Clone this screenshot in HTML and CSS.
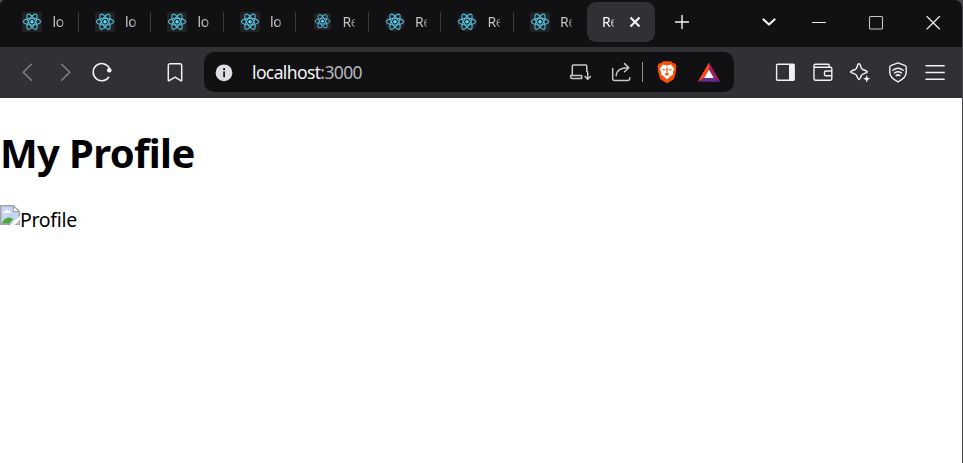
FILE: index.html
```html
<!DOCTYPE html>
<html lang="en">
<head>
<meta charset="utf-8">
<title>React App</title>
<link rel="stylesheet" href="styles.css">
</head>
<body>
<svg class="defs" width="0" height="0">
  <symbol id="react" viewBox="0 0 20 20">
    <g fill="none" stroke="#52b9d6" stroke-width="1.15">
      <ellipse cx="10" cy="9.7" rx="8.6" ry="3.3"/>
      <ellipse cx="10" cy="9.7" rx="8.6" ry="3.3" transform="rotate(60 10 9.7)"/>
      <ellipse cx="10" cy="9.7" rx="8.6" ry="3.3" transform="rotate(120 10 9.7)"/>
    </g>
    <circle cx="10" cy="9.7" r="1.7" fill="#61dafb"/>
  </symbol>
</svg>
<div class="window">
  <header class="titlebar">
    <div class="tab"><svg class="favicon"><use href="#react"/></svg><span class="label">lo</span></div>
    <div class="tab"><svg class="favicon"><use href="#react"/></svg><span class="label">lo</span></div>
    <div class="tab"><svg class="favicon"><use href="#react"/></svg><span class="label">lo</span></div>
    <div class="tab"><svg class="favicon"><use href="#react"/></svg><span class="label">lo</span></div>
    <div class="tab"><svg class="favicon small"><use href="#react"/></svg><span class="label">Re</span></div>
    <div class="tab"><svg class="favicon round"><use href="#react"/></svg><span class="label">Re</span></div>
    <div class="tab"><svg class="favicon round"><use href="#react"/></svg><span class="label">Re</span></div>
    <div class="tab last"><svg class="favicon"><use href="#react"/></svg><span class="label">Re</span></div>
    <div class="tab-active"><span class="label">Re</span>
      <svg class="tab-close" viewBox="0 0 12 12"><path d="M1.5 1.5l9 9M10.500 1.500l-9 9" stroke="#fff" stroke-width="2"/></svg>
    </div>
    <svg class="icon new-tab" viewBox="0 0 24 24"><path d="M12 5.500v13M5.500 12h13"/></svg>
    <svg class="icon tab-search" viewBox="0 0 24 24"><path d="M6.500 9.500l5.500 5 5.500-5" stroke-width="2.200"/></svg>
    <svg class="icon minimize" viewBox="0 0 24 24"><path d="M5.500 12.500h13" stroke-width="1"/></svg>
    <svg class="icon maximize" viewBox="0 0 24 24"><rect x="5.500" y="6.500" width="13" height="12.500" rx="1" stroke="#c4c4c4" stroke-width="1.100"/></svg>
    <svg class="icon close" viewBox="0 0 24 24"><path d="M6 6.500l12.500 12.500M18.500 6.500l-12.500 12.500" stroke-width="1.150"/></svg>
  </header>
  <nav class="toolbar">
    <div class="group">
      <svg class="icon dim" viewBox="0 0 24 24"><path d="M16.500 4.200L8.200 12.200l8.300 8"/></svg>
      <svg class="icon dim" viewBox="0 0 24 24"><path d="M8.500 4.200l8.300 8-8.300 8"/></svg>
      <svg class="icon" viewBox="0 0 24 24"><path d="M19.100 7.600A8.600 8.600 0 1 0 18.700 17.300" stroke-width="1.600"/><circle cx="19.300" cy="10.300" r="2.300" fill="#fff" stroke="none"/></svg>
    </div>
    <svg class="icon bookmark" viewBox="0 0 24 24"><path d="M7 3.700h10a1.700 1.700 0 0 1 1.700 1.700v14.800q0 .9-.9.400L12 17.200l-5.800 3.400q-.9.500-.9-.4V5.400A1.700 1.700 0 0 1 7 3.700z" stroke-width="1.500"/></svg>
    <div class="address">
      <svg class="icon" viewBox="0 0 24 24"><circle cx="12" cy="12.800" r="8.400" fill="#dedde3" stroke="none"/><path d="M12.100 12v4.600" stroke="#111113" stroke-width="1.700"/><circle cx="12.100" cy="9.200" r="1.100" fill="#111113" stroke="none"/></svg>
      <span class="url">localhost<span class="port">:3000</span></span>
      <svg class="icon muted" viewBox="0 0 24 24"><path d="M4.300 15V6q0-1 1-1h12.500q1 0 1 1v5.500M2.700 15.500h11v2.900H4q-1.300 0-1.300-1.500zM19.700 12v7M17 16.500l2.700 2.700 2.700-2.700" stroke-width="1.500"/></svg>
      <svg class="icon muted share" viewBox="0 0 24 24"><path d="M3.700 8.500v10q0 2 2 2h13q2 0 2-2v-.8M7.200 15.700c.3-5.700 4-8 12-8M15.500 3.600l4.300 4.100-4.300 4" stroke-width="1.500"/></svg>
      <i class="divider"></i>
      <svg class="icon shield" viewBox="0 0 24 24">
        <path d="M8 1.200h8l2 2h2l1.600 3-.7 2 .4 1.500-2 8q-.5 1.400-1.800 2.300L12 23.200 6.500 20q-1.300-.9-1.800-2.300l-2-8 .4-1.500-.7-2L4 3.200h2z" fill="#fb4f05" stroke="none"/>
        <path d="M8 4.600l4 .8 4-.8 3.300 4.200-1.500 3.200.4 2.200-3.200 2.200-3 3-3-3-3.200-2.200.4-2.200-1.500-3.200z" fill="#fff" stroke="none"/>
        <path d="M6.700 8.800l3.500.7-1 1.400zM17.300 8.800l-3.500.7 1 1.400zM11.200 7.500h1.600l-.3 5.300 1.800 1.500-2.300 1.500-2.300-1.500 1.800-1.500z" fill="#fb4f05" stroke="none"/>
      </svg>
      <svg class="icon rewards" viewBox="0 0 24 24">
        <path d="M12 2.400L.8 21.800l6.500-3.900L12 10z" fill="#ff4724" stroke="none"/>
        <path d="M12 2.400l11.400 19.400-6.700-3.900L12 10z" fill="#9e1f63" stroke="none"/>
        <path d="M.8 21.800h22.600l-6.700-3.900H7.300z" fill="#662d91" stroke="none"/>
        <path d="M12 9.700l4.800 8.400H7.200z" fill="#fff" stroke="none"/>
      </svg>
    </div>
    <div class="group tools">
      <svg class="icon" viewBox="0 0 24 24"><rect x="3.600" y="4.200" width="17.600" height="16" rx="1"/><path d="M16 4h5v16.400h-5z" fill="#f2f2f5" stroke="none"/></svg>
      <svg class="icon" viewBox="0 0 24 24"><path d="M4.500 4.300h12.700q1 0 1 1v2H19.500q1.300 0 1.300 1.300v10.200q0 1.400-1.400 1.400H4.500q-1.500 0-1.500-1.500V5.800Q3 4.300 4.500 4.300zM3 7.300h16M20.800 11h-6q-1.300 0-1.300 1.300v2.200q0 1.300 1.300 1.300h6"/></svg>
      <svg class="icon" viewBox="0 0 24 24"><path d="M10.900 3.700q.8 0 1.100.8l1.500 3.700q.4 1 1.300 1.300l3.800 1.500q1.500.8 0 1.600l-3.800 1.500q-.9.300-1.300 1.300L12 18.500q-1 1.900-2 0l-1.500-3.100q-.4-1-1.300-1.300l-3.900-1.500q-1.500-.8 0-1.600l3.900-1.500q.9-.300 1.300-1.300L9.900 4.500q.3-.8 1-.8z"/><path d="M18.700 15.200l1 2.600 2.600 1-2.600 1-1 2.600-1-2.600-2.600-1 2.600-1z" fill="#fff" stroke="none"/></svg>
      <svg class="icon" viewBox="0 0 24 24"><path d="M12 2.900l6.700 2.400q1.500.5 1.500 2v5c0 4.300-3.300 7.200-8.200 9.500-4.900-2.300-8.200-5.200-8.200-9.500v-5q0-1.500 1.500-2zM6.800 10.200q5.200-4 10.400 0M8.500 13q3.500-2.600 7 0"/><path d="M10.300 15.500q1.700-1.200 3.400 0" stroke-width="1.700"/></svg>
      <svg class="icon" viewBox="0 0 24 24"><path d="M3 5.800h18.200M3 12.500h18.200M3 19.200h18.200"/></svg>
    </div>
  </nav>
  <main class="page">
    <h1>My Profile</h1>
    <div class="profile">
      <svg class="broken" viewBox="0 0 20 20">
        <path d="M.7.700h12.700l5.900 5.900v12.700H.7z" fill="#c5d7f5" stroke="#a5a5a5" stroke-width="1.400"/>
        <path d="M3 8q0-2 2-2 2-3 4.200 0 2 .2 2 2z" fill="#fff"/>
        <path d="M1.400 18.600q5-9.500 12-4.500l-4 4.500z" fill="#50a53b"/>
        <path d="M10 20L20 11v3.500L14.500 20z" fill="#fff"/>
        <path d="M13.400.7v5.900h5.900z" fill="#fff" stroke="#a5a5a5" stroke-width="1.300"/>
      </svg><span>Profile</span>
    </div>
  </main>
</div>
</body>
</html>
```
FILE: styles.css
```css
* { box-sizing: border-box; }
body {
  margin: 0;
  background: #4a494e;
  font-family: "Noto Sans", "Open Sans", sans-serif;
}
.defs { display: block; }
.window {
  width: 962px;
  height: 463px;
  display: flex;
  flex-direction: column;
  background: #fff;
  overflow: hidden;
}
.titlebar {
  flex: 0 0 47px;
  display: flex;
  padding-left: 6px;
  background: #111113;
  border-radius: 5px 7px 0 0;
  box-shadow: 0 0 0 5px #4a494e;
}
.tab {
  flex: 0 0 72.5px;
  height: 44px;
  display: flex;
  align-items: center;
  padding-left: 16px;
  background: linear-gradient(#3c3c40, #3c3c40) right 12px / 1px 20px no-repeat;
}
.tab.last { background: none; }
.favicon {
  width: 20px;
  height: 20px;
  flex: none;
  border-radius: 2px;
  background: #222224;
}
.favicon.small { width: 17px; height: 17px; margin: 0 1.5px; position: relative; top: -1px; }
.favicon.round { border-radius: 50%; }
.label {
  width: 12px;
  margin-left: 10.500px;
  overflow: hidden;
  white-space: nowrap;
  font-size: 14px;
  letter-spacing: -.4px;
  line-height: 20px;
  color: #c4c4c7;
  -webkit-mask-image: linear-gradient(90deg, #000 55%, rgba(0, 0, 0, .45));
  mask-image: linear-gradient(90deg, #000 55%, rgba(0, 0, 0, .45));
}
.tab-active {
  flex: 0 0 68px;
  height: 40px;
  margin: 2px 0 0 1px;
  display: flex;
  align-items: center;
  border-radius: 9px;
  background: #313035;
}
.tab-active .label { margin-left: 15px; color: #fff; }
.tab-close { width: 12px; height: 12px; margin-left: 15px; }
.icon {
  width: 24px;
  height: 24px;
  flex: none;
  fill: none;
  stroke: #f2f2f5;
  stroke-width: 1.4;
  stroke-linecap: round;
  stroke-linejoin: round;
}
.titlebar .icon { margin-top: 10px; }
.titlebar .new-tab { margin-left: 15px; }
.titlebar .tab-search { margin-left: 63px; }
.titlebar .minimize { margin-left: 26px; }
.titlebar .maximize { margin-left: 33px; }
.titlebar .close { margin-left: 33px; }
.toolbar {
  flex: 0 0 51px;
  display: flex;
  align-items: center;
  padding: 0 0 1px 15px;
  background: #313035;
}
.group { display: flex; gap: 13.5px; }
.icon.dim { stroke: #858489; }
.icon.muted { stroke: #c7c7ca; }
.bookmark { margin-left: 49px; }
.address {
  width: 530px;
  height: 40px;
  margin-left: 17px;
  padding: 0 13px 0 8px;
  display: flex;
  align-items: center;
  border-radius: 10px;
  background: #111113;
}
.url {
  flex: 1;
  margin-left: 16px;
  font-size: 17.500px;
  letter-spacing: -.62px;
  color: #f4f4f6;
}
.port { color: #b5b5b9; }
.share { margin-left: 17px; }
.divider { width: 1px; height: 20px; margin-left: 9px; background: #929296; }
.shield { margin-left: 12px; }
.rewards { margin-left: 18px; }
.tools { margin-left: 39px; }
.page { color: #000; }
h1 {
  margin: 28px 0 0;
  font-size: 40px;
  letter-spacing: -.65px;
  line-height: 54px;
  font-weight: 700;
}
.profile {
  display: flex;
  margin-top: 25px;
  font-size: 19.500px;
  letter-spacing: -.3px;
  line-height: 30px;
}
.broken { width: 20px; height: 20px; }
```
